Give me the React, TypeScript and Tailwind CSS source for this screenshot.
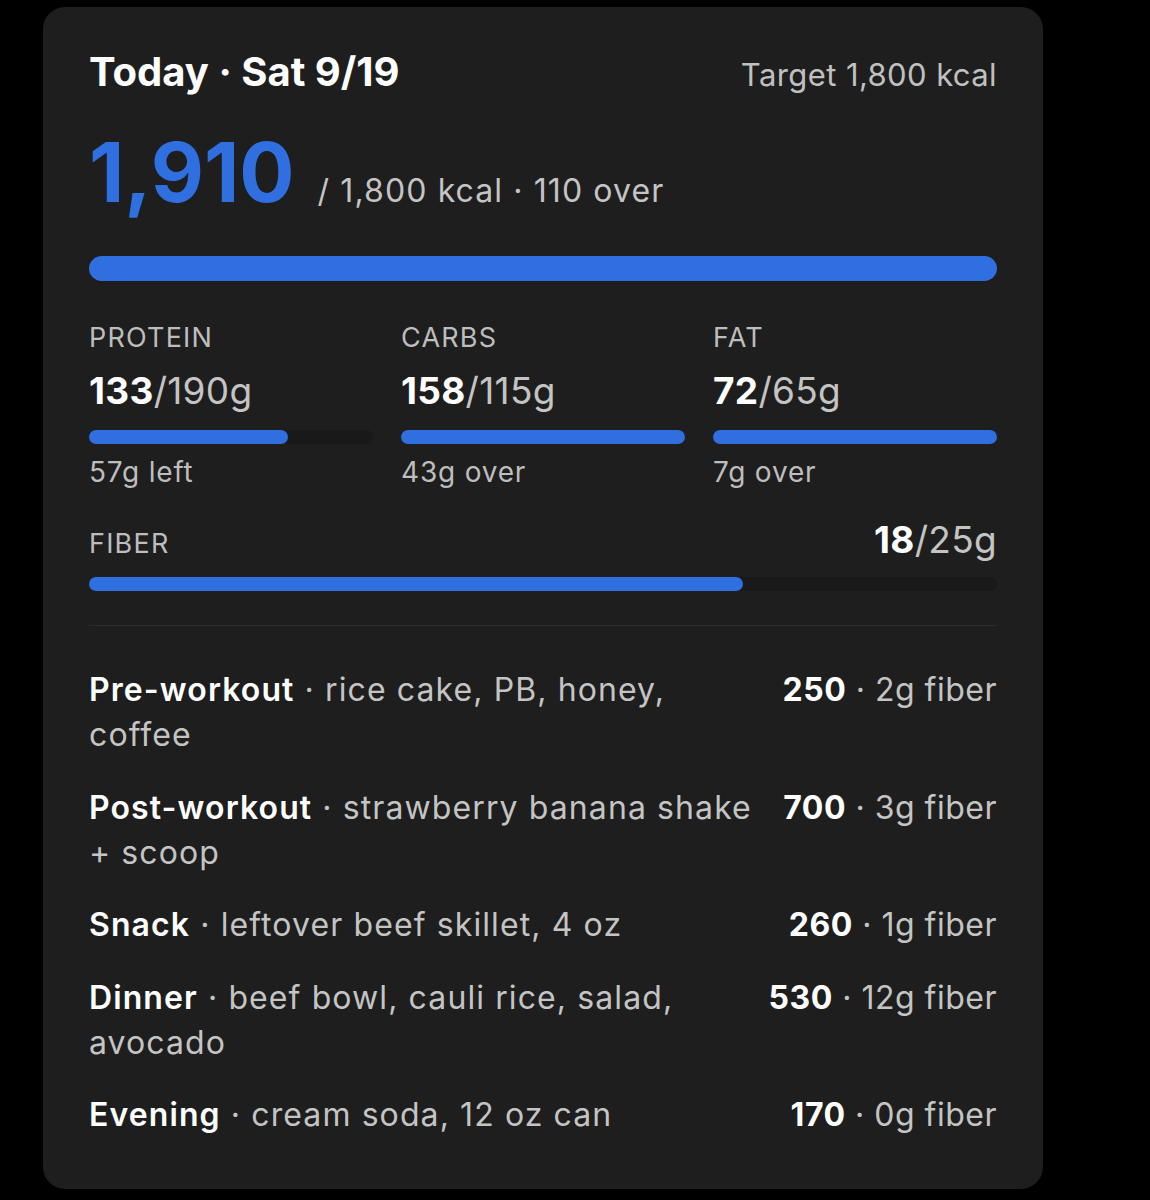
import React from "react";

const font = { fontFamily: "Inter, 'Noto Sans', 'Liberation Sans', sans-serif" };

function Bar({ pct, h }: { pct: number; h: string }) {
  return (
    <div className={`w-full ${h} rounded-full bg-[#191919]`}>
      <div className={`${h} rounded-full bg-[#2f6fdf]`} style={{ width: `${pct}%` }} />
    </div>
  );
}

function Macro({ label, val, goal, pct, sub }: { label: string; val: string; goal: string; pct: number; sub: string }) {
  return (
    <div className="flex flex-col">
      <div className="text-[27px] leading-[32px] tracking-[1.2px] text-[#bdbdbd]">{label}</div>
      <div className="mt-[15px] text-[37px] leading-[44px] tracking-[0.3px] text-[#c4c4c4]">
        <span className="font-bold text-white">{val}</span>/{goal}
      </div>
      <div className="mt-[17px]">
        <Bar pct={pct} h="h-[14px]" />
      </div>
      <div className="mt-[11px] text-[28px] leading-[34px] tracking-[0.8px] text-[#bdbdbd]">{sub}</div>
    </div>
  );
}

function Meal({ name, desc, kcal, fiber }: { name: string; desc: string; kcal: string; fiber: string }) {
  return (
    <div className="flex items-start justify-between gap-[24px]">
      <div className="text-[32px] leading-[45px] tracking-[1.1px] text-[#c4c4c4]">
        <span className="font-semibold text-white">{name}</span> · {desc}
      </div>
      <div className="shrink-0 whitespace-nowrap text-[32px] leading-[45px] tracking-[0.5px] text-[#c4c4c4]">
        <span className="font-bold text-white">{kcal}</span> · {fiber}
      </div>
    </div>
  );
}

export default function App() {
  return (
    <div className="min-h-[1200px] w-[1150px] bg-black pt-[7px]" style={font}>
      <div className="ml-[43px] w-[1000px] rounded-[22px] bg-[#1e1e1e] px-[46px] pb-[52px] pt-[41px]">
        <div className="flex items-baseline justify-between">
          <div className="text-[40px] font-bold leading-[48px] text-white">Today · Sat 9/19</div>
          <div className="text-[31px] leading-[36px] tracking-[0.4px] text-[#c0c0c0]">Target 1,800 kcal</div>
        </div>
        <div className="mt-[36px] flex items-baseline gap-[23px]">
          <div className="text-[82px] font-bold leading-[82px] tracking-[0px] text-[#2f6fdf]">1,910</div>
          <div className="text-[32px] leading-[40px] tracking-[1.1px] text-[#c4c4c4]">/ 1,800 kcal · 110 over</div>
        </div>
        <div className="mt-[42px]">
          <Bar pct={100} h="h-[25px]" />
        </div>
        <div className="mt-[41px] grid grid-cols-3 gap-[28px]">
          <Macro label="PROTEIN" val="133" goal="190g" pct={70} sub="57g left" />
          <Macro label="CARBS" val="158" goal="115g" pct={100} sub="43g over" />
          <Macro label="FAT" val="72" goal="65g" pct={100} sub="7g over" />
        </div>
        <div className="mt-[29px] flex items-baseline justify-between">
          <div className="text-[27px] leading-[32px] tracking-[1.2px] text-[#bdbdbd]">FIBER</div>
          <div className="text-[37px] leading-[44px] tracking-[0.3px] text-[#c4c4c4]">
            <span className="font-bold text-white">18</span>/25g
          </div>
        </div>
        <div className="mt-[15px]">
          <Bar pct={72} h="h-[14px]" />
        </div>
        <div className="mt-[34px] h-px bg-[#2c2c2c]" />
        <div className="mt-[41px] flex flex-col gap-[27.5px]">
          <Meal name="Pre-workout" desc="rice cake, PB, honey, coffee" kcal="250" fiber="2g fiber" />
          <Meal name="Post-workout" desc="strawberry banana shake + scoop" kcal="700" fiber="3g fiber" />
          <Meal name="Snack" desc="leftover beef skillet, 4 oz" kcal="260" fiber="1g fiber" />
          <Meal name="Dinner" desc="beef bowl, cauli rice, salad, avocado" kcal="530" fiber="12g fiber" />
          <Meal name="Evening" desc="cream soda, 12 oz can" kcal="170" fiber="0g fiber" />
        </div>
      </div>
    </div>
  );
}
